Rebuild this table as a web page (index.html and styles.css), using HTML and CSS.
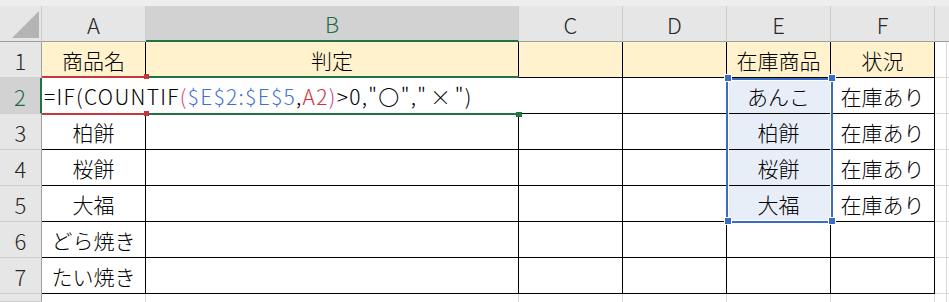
FILE: index.html
```html
<!DOCTYPE html>
<html lang="ja">
<head>
<meta charset="utf-8">
<link rel="stylesheet" href="styles.css">
</head>
<body>
<div class="sheet">
  <div class="strip"></div>

  <div class="hd corner"><span class="tri"></span></div>
  <div class="hd ch">A</div>
  <div class="hd ch sel">B</div>
  <div class="hd ch">C</div>
  <div class="hd ch">D</div>
  <div class="hd ch">E</div>
  <div class="hd ch">F</div>
  <div class="hd ch last"></div>

  <div class="hd rh">1</div>
  <div class="c y">商品名</div>
  <div class="c y">判定</div>
  <div class="c y"></div>
  <div class="c y"></div>
  <div class="c y">在庫商品</div>
  <div class="c y">状況</div>
  <div class="g"></div>

  <div class="hd rh sel">2</div>
  <div class="c edit"><span class="formula">=IF(COUNTIF<span class="pk">(</span><span class="bl">$E$2:$E$5</span>,<span class="rd">A2</span><span class="pk">)</span>&gt;0,"〇","&#8202;×&#8202;")</span></div>
  <div class="c"></div>
  <div class="c"></div>
  <div class="c ref">あんこ</div>
  <div class="c">在庫あり</div>
  <div class="g"></div>

  <div class="hd rh">3</div>
  <div class="c">柏餅</div>
  <div class="c"></div>
  <div class="c"></div>
  <div class="c"></div>
  <div class="c ref">柏餅</div>
  <div class="c">在庫あり</div>
  <div class="g"></div>

  <div class="hd rh">4</div>
  <div class="c">桜餅</div>
  <div class="c"></div>
  <div class="c"></div>
  <div class="c"></div>
  <div class="c ref">桜餅</div>
  <div class="c">在庫あり</div>
  <div class="g"></div>

  <div class="hd rh">5</div>
  <div class="c">大福</div>
  <div class="c"></div>
  <div class="c"></div>
  <div class="c"></div>
  <div class="c ref">大福</div>
  <div class="c">在庫あり</div>
  <div class="g"></div>

  <div class="hd rh">6</div>
  <div class="c">どら焼き</div>
  <div class="c"></div>
  <div class="c"></div>
  <div class="c"></div>
  <div class="c"></div>
  <div class="c"></div>
  <div class="g"></div>

  <div class="hd rh">7</div>
  <div class="c">たい焼き</div>
  <div class="c"></div>
  <div class="c"></div>
  <div class="c"></div>
  <div class="c"></div>
  <div class="c"></div>
  <div class="g"></div>

  <div class="hd rh"></div>
  <div class="e"></div>
  <div class="e"></div>
  <div class="e"></div>
  <div class="e"></div>
  <div class="e"></div>
  <div class="e"></div>
  <div class="g last-g"></div>

  <div class="mark red red-top"></div>
  <div class="mark red red-bot"></div>
  <div class="mark green green-top"></div>
  <div class="mark green green-bot"></div>
  <div class="mark red handle h-red1"></div>
  <div class="mark red handle h-red2"></div>
  <div class="mark green handle h-green"></div>

  <div class="refbox"></div>
  <div class="mark blue bhandle hb1"></div>
  <div class="mark blue bhandle hb2"></div>
  <div class="mark blue bhandle hb3"></div>
  <div class="mark blue bhandle hb4"></div>
</div>
</body>
</html>
```
FILE: styles.css
```css
* { box-sizing: border-box; margin: 0; padding: 0; }
html, body { background: #fff; }
body {
  margin: 0;
  width: 949px;
  height: 302px;
  overflow: hidden;
  font-family: "Noto Sans CJK JP", "Noto Sans", sans-serif;
  font-size: 21px;
  font-weight: 300;
  color: #000;
}
.sheet {
  position: relative;
  display: grid;
  grid-template-columns: 42px 104px 373px 104px 104px 104px 104px 1fr;
  grid-template-rows: 6px repeat(8, 36px) 8px;
}
.strip { grid-column: 1 / -1; background: #eeeeee; }
.hd {
  background: #e6e6e6;
  display: flex;
  align-items: center;
  justify-content: center;
  color: #262626;
  font-size: 22px;
}
.ch { border-right: 1px solid #cfcfcf; border-bottom: 1px solid #9e9e9e; }
.corner {
  border-right: 1px solid #cfcfcf;
  border-bottom: 1px solid #9e9e9e;
  align-items: flex-end;
  justify-content: flex-end;
  padding: 0 2px 3px 0;
}
.tri {
  width: 0; height: 0;
  border-left: 27px solid transparent;
  border-bottom: 27px solid #b4b4b4;
}
.ch.last { border-right: none; }
.ch.sel { background: #d2d2d2; color: #1f6b42; border-bottom: 2px solid #217346; }
.rh { border-right: 1px solid #9e9e9e; border-bottom: 1px solid #cfcfcf; }
.rh.sel { background: #d2d2d2; color: #1f6b42; border-right: 2px solid #217346; }
.c {
  border-right: 1px solid #000;
  border-bottom: 1px solid #000;
  display: flex;
  align-items: center;
  justify-content: center;
  white-space: nowrap;
}
.y { background: #fff2cc; }
.ref { background: #e8eef8; }
.edit {
  grid-column: span 2;
  justify-content: flex-start;
  padding-left: 2px;
  border-right: none;
  background: #fff;
}
.formula { letter-spacing: 1.3px; }
.pk { color: #d0428a; }
.bl { color: #3f72d0; }
.rd { color: #d1343d; }
.g {
  border-bottom: 1px solid #dadada;
  background: linear-gradient(to right, transparent 11px, #dadada 11px, #dadada 12px, transparent 12px);
}
.g.last-g { border-bottom: none; }
.e { border-right: 1px solid #dadada; }

.mark { position: absolute; }
.red { background: #c5373d; }
.green { background: #217346; }
.blue { background: #3a6cc7; }
.red-top { left: 42px; top: 76px; width: 104px; height: 2px; }
.red-bot { left: 42px; top: 113px; width: 104px; height: 2px; }
.green-top { left: 146px; top: 76px; width: 373px; height: 2px; }
.green-bot { left: 146px; top: 113px; width: 370px; height: 2px; }
.handle { width: 5px; height: 5px; }
.h-red1 { left: 144px; top: 74px; }
.h-red2 { left: 144px; top: 111px; }
.h-green { left: 516px; top: 112px; width: 6px; }
.refbox {
  position: absolute;
  left: 726px; top: 78px;
  width: 107px; height: 145px;
  border: 2px solid #3a6cc7;
  box-shadow: inset 0 0 0 1px #fff;
}
.bhandle { width: 6px; height: 6px; box-shadow: 0 0 0 1px #fff; }
.hb1 { left: 725px; top: 75px; }
.hb2 { left: 829px; top: 75px; }
.hb3 { left: 725px; top: 218px; }
.hb4 { left: 829px; top: 218px; }
```
